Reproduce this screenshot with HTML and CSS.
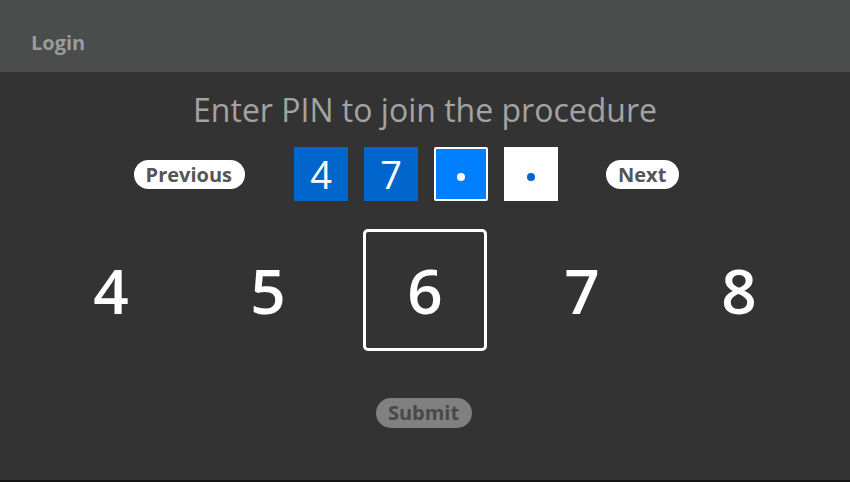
FILE: index.html
```html
<!DOCTYPE html>
<html lang="en">
<head>
    <meta charset="UTF-8">
    <meta name="viewport" content="width=device-width, initial-scale=1.0">
    <title>Login</title>
    <link rel="stylesheet" href="styles.css">
</head>
<body>
    <div class="app">
        <header class="topbar">
            <span class="topbar-title">Login</span>
        </header>

        <main class="pin-page">
            <h1 class="pin-title">Enter PIN to join the procedure</h1>

            <!-- entered digits -->
            <div class="pin-row">
                <div class="pin-nav pin-nav-left">
                    <button class="pill">Previous</button>
                </div>
                <div class="pin-slots">
                    <div class="slot slot-filled">4</div>
                    <div class="slot slot-filled">7</div>
                    <div class="slot slot-active"><span class="dot"></span></div>
                    <div class="slot slot-empty"><span class="dot"></span></div>
                </div>
                <div class="pin-nav pin-nav-right">
                    <button class="pill">Next</button>
                </div>
            </div>

            <!-- digit picker -->
            <div class="picker">
                <div class="pick">4</div>
                <div class="pick">5</div>
                <div class="pick pick-selected">6</div>
                <div class="pick">7</div>
                <div class="pick">8</div>
            </div>

            <div class="submit-row">
                <button class="pill pill-disabled">Submit</button>
            </div>
        </main>
    </div>
</body>
</html>
```

FILE: styles.css
```css
html {
    background: #141414;
}
body {
    margin: 0;
    font-family: "Open Sans", "DejaVu Sans", sans-serif;
}
.app {
    height: 480px;
    background: #333333;
    overflow: hidden;
}
.topbar {
    height: 72px;
    background: #4b4c4c;
    display: flex;
    align-items: flex-end;
    padding: 0 0 17px 31px;
    box-sizing: border-box;
}
.topbar-title {
    font-size: 20px;
    font-weight: 700;
    color: #9b9b9b;
    line-height: 24px;
}
.pin-page {
    display: flex;
    flex-direction: column;
    align-items: center;
}
.pin-title {
    margin: 18px 0 0;
    font-size: 32px;
    font-weight: 400;
    line-height: 40px;
    color: #a3a3a3;
}
.pin-row {
    margin-top: 17px;
    width: 100%;
    display: grid;
    grid-template-columns: 1fr auto 1fr;
    align-items: center;
    padding-left: 2px;
    box-sizing: border-box;
}
.pin-nav-left {
    display: flex;
    justify-content: flex-end;
    padding-right: 41px;
}
.pin-nav-right {
    display: flex;
    justify-content: flex-start;
    padding-left: 40px;
}
.pill {
    height: 29px;
    padding: 0 13px 0 12px;
    border: none;
    border-radius: 15px;
    background: #ffffff;
    color: #555555;
    font-family: inherit;
    font-size: 20px;
    font-weight: 700;
    line-height: 29px;
}
.pin-slots {
    display: flex;
    gap: 16px;
    padding: 0 8px;
}
.slot {
    width: 54px;
    height: 54px;
    box-sizing: border-box;
    display: flex;
    align-items: center;
    justify-content: center;
    font-size: 38px;
    font-weight: 400;
    color: #ffffff;
}
.slot-filled {
    background: #0066cc;
}
.slot-active {
    background: #0080ff;
    border: 2px solid #ffffff;
    border-radius: 2px;
}
.slot-empty {
    background: #ffffff;
}
.dot {
    width: 8px;
    height: 8px;
    border-radius: 50%;
    background: #ffffff;
    margin-top: 5px;
}
.slot-empty .dot {
    background: #0066cc;
}
.picker {
    margin-top: 28px;
    display: grid;
    grid-template-columns: repeat(5, 157px);
    justify-items: center;
}
.pick {
    width: 124px;
    height: 122px;
    box-sizing: border-box;
    display: flex;
    align-items: center;
    justify-content: center;
    font-size: 62px;
    font-weight: 600;
    color: #ffffff;
}
.pick-selected {
    border: 3px solid #ffffff;
    border-radius: 5px;
}
.submit-row {
    margin-top: 47px;
}
.pill-disabled {
    height: 30px;
    line-height: 30px;
    padding: 0 13px 0 12px;
    background: #808080;
    color: #484848;
    transform: translateX(-1px);
}
```
